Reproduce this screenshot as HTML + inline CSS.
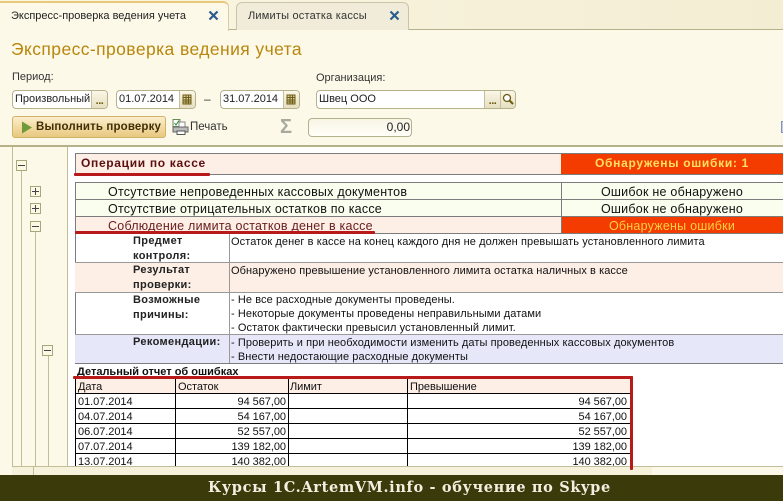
<!DOCTYPE html>
<html><head><meta charset="utf-8"><style>
html,body{margin:0;padding:0}
body{width:783px;height:501px;overflow:hidden;position:relative;background:#fdf9e8;font-family:"Liberation Sans",sans-serif;font-size:11px;color:#000}
.a{position:absolute;box-sizing:border-box;white-space:nowrap}
.f{position:absolute;box-sizing:border-box;background:#fff;border:1px solid #b5b18c;border-radius:4px;height:19px;top:90px;overflow:hidden;line-height:17px;padding-left:2px;font-size:11px;color:#222}
.b{position:absolute;top:0;bottom:0;right:0;background:linear-gradient(#fbf7e6,#e6dfc0);border-left:1px solid #c4bf9f}
.c{position:absolute;box-sizing:border-box;overflow:hidden;white-space:nowrap}
.r{position:absolute;background:#b81a1a;border-radius:1px}
.t{position:absolute;box-sizing:border-box;width:11px;height:11px;background:#fbf8e6;border:1px solid #a9a67a}
.t:before{content:"";position:absolute;left:1px;right:1px;top:4px;height:1px;background:#444}
.p:after{content:"";position:absolute;top:1px;bottom:1px;left:4px;width:1px;background:#444}
.v{position:absolute;width:1px;background:#c2bf98}
.big{font-size:12.5px;letter-spacing:.23px;line-height:16px;color:#111}
.sm{font-size:11px;letter-spacing:.08px;line-height:14px;color:#111}
.lb{font-weight:bold;font-size:11px;line-height:14.5px;letter-spacing:.35px;left:133px;color:#222}
.bd{position:absolute;background:#7c7c7c}
.k{position:absolute;background:#000}
.d{font-size:11px;line-height:14px;color:#111;letter-spacing:-.05px}
</style></head><body>
<div class="a" style="left:0;top:0;width:783px;height:30px;background:linear-gradient(90deg,#fbf6e2,#f3edd3);border-bottom:1px solid #b5b18c"></div>
<div class="a" style="left:0;top:1px;width:229px;height:30px;background:#fdf9e8;border:1px solid #d3cfa8;border-top:2px solid #e8c87a;border-left:0;border-bottom:0;border-radius:0 6px 0 0"></div>
<div class="a" style="left:236px;top:2px;width:173px;height:28px;background:#f0ecd9;border:1px solid #c8c5ab;border-bottom:0;border-radius:6px 6px 0 0"></div>
<div class="a" style="left:11px;top:9px;font-size:11px;line-height:15px;color:#222">Экспресс-проверка ведения учета</div>
<div class="a" style="left:248px;top:9px;font-size:11px;letter-spacing:.2px;line-height:15px;color:#333">Лимиты остатка кассы</div>
<svg class="a" style="left:208px;top:10px" width="11" height="11"><path d="M1.5 1.5L9.5 9.5M9.500 1.500L1.500 9.500" stroke="#2c5c8c" stroke-width="2.200"/></svg>
<svg class="a" style="left:389px;top:10px" width="11" height="11"><path d="M1.500 1.500L9.500 9.500M9.500 1.500L1.500 9.500" stroke="#2c5c8c" stroke-width="2.200"/></svg>
<div class="a" style="left:11px;top:38px;font-size:17.5px;line-height:22px;letter-spacing:.41px;color:#b8860b">Экспресс-проверка ведения учета</div>
<div class="a" style="left:12px;top:70px;line-height:14px;color:#333;font-size:11px">Период:</div>
<div class="a" style="left:316px;top:71px;line-height:14px;color:#333;font-size:11px">Организация:</div>
<div class="f" style="left:12px;width:96px">Произвольный<div class="b" style="width:15px;background:linear-gradient(#fbf7e6,#e6dfc0);color:#6b5a10;text-align:center;line-height:20px;font-weight:bold;font-size:11px;letter-spacing:-.5px">...</div></div>
<div class="f" style="left:116px;width:80px">01.07.2014<div class="b" style="width:15px"><svg width="14" height="17" style="display:block"><path d="M3 4h8v9H3zM3 6.500h8M3 9h8M3 11h8M6 4v9M8.500 4v9" fill="#d8cfa0" stroke="#6b5a10"/></svg></div></div>
<div class="a" style="left:204px;top:92px;line-height:14px;font-size:12px;color:#333">–</div>
<div class="f" style="left:220px;width:80px">31.07.2014<div class="b" style="width:15px"><svg width="14" height="17" style="display:block"><path d="M3 4h8v9H3zM3 6.500h8M3 9h8M3 11h8M6 4v9M8.500 4v9" fill="#d8cfa0" stroke="#6b5a10"/></svg></div></div>
<div class="f" style="left:316px;width:200px">Швец ООО<div class="b" style="width:30px"><div style="position:absolute;left:0;top:0;bottom:0;width:15px;border-right:1px solid #c4bf9f;color:#6b5a10;text-align:center;line-height:20px;font-weight:bold;font-size:11px;letter-spacing:-.5px">...</div><svg width="14" height="17" style="position:absolute;left:16px;top:0"><circle cx="6" cy="7" r="3.500" fill="#fff" stroke="#6b5a10" stroke-width="1.300"/><path d="M8.500 9.500L12 13" stroke="#6b5a10" stroke-width="2"/></svg></div></div>
<div class="a" style="left:12px;top:116px;width:154px;height:22px;background:linear-gradient(#fbeecb,#e8c87e);border:1px solid #d2b26a;border-radius:3px"></div>
<svg class="a" style="left:21px;top:121px" width="12" height="13"><path d="M1 0.500L11 6.500L1 12.500Z" fill="#6f9a3a"/></svg>
<div class="a" style="left:36px;top:120px;font-size:11.500px;font-weight:bold;line-height:14px;letter-spacing:.14px;color:#3f3008">Выполнить проверку</div>
<svg class="a" style="left:172px;top:119px" width="17" height="16"><rect x="1" y="0.500" width="7" height="7" fill="#fff" stroke="#6a8a5a"/><path d="M2.500 4L4 6L7 1.500" stroke="#2a8a2a" fill="none"/><rect x="7" y="3" width="6" height="5" fill="#fff" stroke="#888"/><rect x="1" y="8" width="15" height="5" fill="#bbb" stroke="#666"/><rect x="5" y="12" width="8" height="3.500" fill="#fff" stroke="#555"/></svg>
<div class="a" style="left:190px;top:120px;font-size:11.500px;line-height:14px;color:#333">Печать</div>
<div class="a" style="left:280px;top:116px;font-size:20px;font-weight:bold;line-height:22px;color:#aaa9a0">Σ</div>
<div class="a" style="left:308px;top:118px;width:104px;height:19px;background:linear-gradient(#f8f5e6,#fffef8);border:1px solid #b5b18c;border-radius:4px;text-align:right;padding-right:1px;font-size:12px;line-height:17px;color:#222">0,00</div>
<div class="a" style="left:781px;top:121px;width:2px;height:12px;background:#c8d0e8;border:1px solid #8090b8;border-right:0"></div>

<div class="a" style="left:0;top:145px;width:783px;height:2px;background:#b5b28a"></div>
<div class="a" style="left:67px;top:147px;width:716px;height:319px;background:#fff"></div>
<div class="v" style="left:12px;top:147px;height:328px"></div>
<div class="v" style="left:67px;top:147px;height:320px"></div>
<div class="v" style="left:21px;top:170px;height:297px"></div>
<div class="v" style="left:35px;top:231px;height:236px"></div>
<div class="v" style="left:48px;top:355px;height:112px"></div>
<div class="t" style="left:16px;top:160px"></div>
<div class="t p" style="left:30px;top:186px"></div>
<div class="t p" style="left:30px;top:203px"></div>
<div class="t" style="left:30px;top:221px"></div>
<div class="t" style="left:42px;top:345px"></div>

<div class="c" style="left:75px;top:153px;width:486px;height:21px;background:#fdeee6"></div>
<div class="c" style="left:561px;top:153px;width:222px;height:21px;background:#f43c00"></div>
<div class="bd" style="left:75px;top:153px;width:708px;height:1px"></div>
<div class="bd" style="left:75px;top:174px;width:708px;height:1px"></div>
<div class="bd" style="left:75px;top:153px;width:1px;height:21px"></div>
<div class="a" style="left:81px;top:155px;font-weight:bold;font-size:12px;letter-spacing:.68px;line-height:16px;color:#5a1010">Операции по кассе</div>
<div class="a" style="left:561px;top:155px;width:222px;text-align:center;font-weight:bold;font-size:12px;letter-spacing:.7px;line-height:16px;color:#ffe060">Обнаружены ошибки: 1</div>

<div class="c" style="left:75px;top:182px;width:708px;height:34px;background:#fafeee"></div>
<div class="c" style="left:75px;top:216px;width:486px;height:17px;background:#fdeee6"></div>
<div class="c" style="left:561px;top:216px;width:222px;height:17px;background:#f43c00"></div>
<div class="bd" style="left:75px;top:182px;width:708px;height:1px"></div>
<div class="bd" style="left:75px;top:199px;width:708px;height:1px"></div>
<div class="bd" style="left:75px;top:216px;width:708px;height:1px"></div>
<div class="bd" style="left:75px;top:233px;width:708px;height:1px"></div>
<div class="bd" style="left:75px;top:182px;width:1px;height:181px"></div>
<div class="bd" style="left:561px;top:182px;width:1px;height:51px"></div>
<div class="a big" style="left:108px;top:184px">Отсутствие непроведенных кассовых документов</div>
<div class="a big" style="left:108px;top:201px">Отсутствие отрицательных остатков по кассе</div>
<div class="a big" style="left:108px;top:218px;color:#6a2020">Соблюдение лимита остатков денег в кассе</div>
<div class="a big" style="left:561px;top:184px;width:222px;text-align:center">Ошибок не обнаружено</div>
<div class="a big" style="left:561px;top:201px;width:222px;text-align:center">Ошибок не обнаружено</div>
<div class="a big" style="left:561px;top:218px;width:222px;text-align:center;color:#ffd040">Обнаружены ошибки</div>

<div class="c" style="left:75px;top:262px;width:708px;height:30px;background:#fdeee6"></div>
<div class="c" style="left:75px;top:334px;width:708px;height:29px;background:#e6e8fa"></div>
<div class="bd" style="left:75px;top:262px;width:708px;height:1px;background:#999"></div>
<div class="bd" style="left:75px;top:292px;width:708px;height:1px;background:#999"></div>
<div class="bd" style="left:75px;top:334px;width:708px;height:1px;background:#999"></div>
<div class="bd" style="left:75px;top:363px;width:708px;height:1px"></div>
<div class="bd" style="left:229px;top:233px;width:1px;height:130px;background:#999"></div>
<div class="a lb" style="top:234px">Предмет<br>контроля:</div>
<div class="a lb" style="top:263px">Результат<br>проверки:</div>
<div class="a lb" style="top:293px">Возможные<br>причины:</div>
<div class="a lb" style="top:335px">Рекомендации:</div>
<div class="a sm" style="left:231px;top:235px">Остаток денег в кассе на конец каждого дня не должен превышать установленного лимита</div>
<div class="a sm" style="left:231px;top:264px">Обнаружено превышение установленного лимита остатка наличных в кассе</div>
<div class="a sm" style="left:231px;top:293px">- Не все расходные документы проведены.</div>
<div class="a sm" style="left:231px;top:307px">- Некоторые документы проведены неправильными датами</div>
<div class="a sm" style="left:231px;top:321px">- Остаток фактически превысил установленный лимит.</div>
<div class="a sm" style="left:231px;top:336px">- Проверить и при необходимости изменить даты проведенных кассовых документов</div>
<div class="a sm" style="left:231px;top:350px">- Внести недостающие расходные документы</div>
<div class="a" style="left:77px;top:365px;font-weight:bold;font-size:11px;line-height:14px;color:#111">Детальный отчет об ошибках</div>

<div class="c" style="left:75px;top:378px;width:556px;height:15px;background:#fdeee6"></div>
<div class="k" style="left:75px;top:393px;width:556px;height:1px"></div>
<div class="k" style="left:75px;top:408px;width:556px;height:1px"></div>
<div class="k" style="left:75px;top:423px;width:556px;height:1px"></div>
<div class="k" style="left:75px;top:438px;width:556px;height:1px"></div>
<div class="k" style="left:75px;top:453px;width:556px;height:1px"></div>
<div class="k" style="left:75px;top:378px;width:1px;height:88px"></div>
<div class="k" style="left:175px;top:378px;width:1px;height:88px"></div>
<div class="k" style="left:288px;top:378px;width:1px;height:88px"></div>
<div class="k" style="left:407px;top:378px;width:1px;height:88px"></div>
<div class="a d" style="left:78px;top:380px">Дата</div>
<div class="a d" style="left:178px;top:380px">Остаток</div>
<div class="a d" style="left:290px;top:380px">Лимит</div>
<div class="a d" style="left:410px;top:380px">Превышение</div>
<div class="a d" style="left:78px;top:395px">01.07.2014</div>
<div class="a d" style="left:78px;top:410px">04.07.2014</div>
<div class="a d" style="left:78px;top:425px">06.07.2014</div>
<div class="a d" style="left:78px;top:440px">07.07.2014</div>
<div class="a d" style="left:78px;top:455px;height:11px;overflow:hidden">13.07.2014</div>
<div class="a d" style="left:176px;top:395px;width:110px;text-align:right">94 567,00</div>
<div class="a d" style="left:176px;top:410px;width:110px;text-align:right">54 167,00</div>
<div class="a d" style="left:176px;top:425px;width:110px;text-align:right">52 557,00</div>
<div class="a d" style="left:176px;top:440px;width:110px;text-align:right">139 182,00</div>
<div class="a d" style="left:176px;top:455px;width:110px;height:11px;overflow:hidden;text-align:right">140 382,00</div>
<div class="a d" style="left:408px;top:395px;width:219px;text-align:right">94 567,00</div>
<div class="a d" style="left:408px;top:410px;width:219px;text-align:right">54 167,00</div>
<div class="a d" style="left:408px;top:425px;width:219px;text-align:right">52 557,00</div>
<div class="a d" style="left:408px;top:440px;width:219px;text-align:right">139 182,00</div>
<div class="a d" style="left:408px;top:455px;width:219px;height:11px;overflow:hidden;text-align:right">140 382,00</div>

<div class="a" style="left:12px;top:466px;width:771px;height:9px;background:#f5f1db;border-top:1px solid #c2bf98"></div>
<div class="v" style="left:33px;top:466px;height:9px"></div>
<div class="v" style="left:652px;top:466px;height:9px"></div>
<div class="a" style="left:652px;top:467px;width:131px;height:8px;background:#fbf8ea"></div>

<div class="r" style="left:74px;top:173px;width:136px;height:3px"></div>
<div class="r" style="left:75px;top:231px;width:300px;height:3px"></div>
<div class="r" style="left:73px;top:376px;width:560px;height:3px"></div>
<div class="r" style="left:630px;top:376px;width:3px;height:94px"></div>

<div class="a" style="left:0;top:475px;width:783px;height:26px;background:#3b3a0a"></div>
<div class="a" style="left:208px;top:479px;font-family:'DejaVu Serif',serif;font-weight:bold;font-size:14.5px;line-height:18px;letter-spacing:.66px;color:#f2efe0">Курсы 1C.ArtemVM.info - обучение по Skype</div>
</body></html>
